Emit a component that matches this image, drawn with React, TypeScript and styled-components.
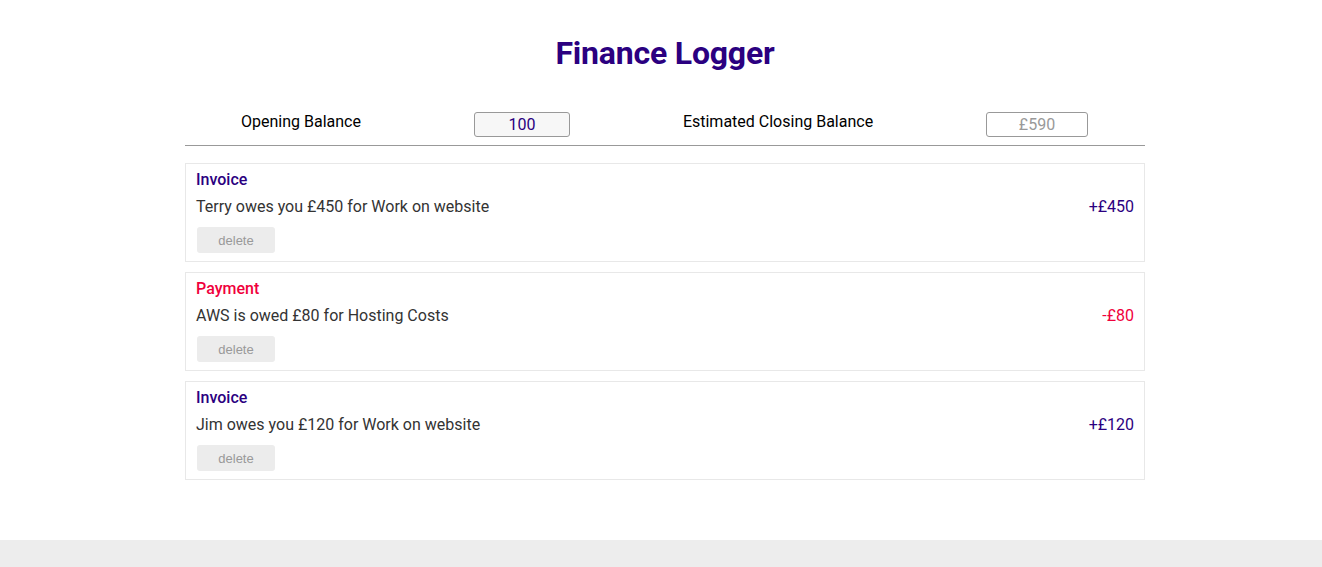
import React from "react";
import styled, { createGlobalStyle } from "styled-components";

const Global = createGlobalStyle`
  html, body { margin: 0; padding: 0; background: #fff; }
  body { font-family: Roboto, "Liberation Sans", sans-serif; }
  * { box-sizing: border-box; }
`;

const Page = styled.div`
  display: flex;
  flex-direction: column;
  min-height: 567px;
`;

const Content = styled.div`
  flex: 1;
  padding-left: 8px;
  padding-bottom: 60px;
`;

const Main = styled.main`
  width: 960px;
  margin: 0 auto;
`;

const Title = styled.h1`
  margin: 0;
  padding-top: 33px;
  height: 94px;
  text-align: center;
  font-size: 32px;
  font-weight: 700;
  letter-spacing: -0.2px;
  color: #2b0080;
  line-height: 40px;
`;

const Header = styled.div`
  display: grid;
  grid-template-columns: repeat(4, 1fr);
  align-items: center;
  height: 52px;
  padding-top: 10px;
  border-bottom: 1px solid #999;
  margin-bottom: 17px;
`;

const Label = styled.div<{ $shift: number }>`
  text-align: center;
  font-size: 16px;
  color: #000;
  padding-right: ${(p) => p.$shift}px;
  margin-top: -6px;
`;

const InputCell = styled.div<{ $offset: number }>`
  padding-left: ${(p) => p.$offset}px;
  display: flex;
`;

const BalanceInput = styled.input<{ $w: number; $muted?: boolean }>`
  width: ${(p) => p.$w}px;
  height: 25px;
  border: 1px solid #999;
  border-radius: 3px;
  background: ${(p) => (p.$muted ? "#fff" : "#f7f7f7")};
  color: ${(p) => (p.$muted ? "#999" : "#2b0080")};
  font-family: Roboto, "Liberation Sans", sans-serif;
  font-size: 16px;
  text-align: center;
  padding: 0;
`;

const List = styled.div`
  display: flex;
  flex-direction: column;
  gap: 10px;
`;

const Card = styled.div`
  border: 1px solid #e8e8e8;
  height: 99px;
  padding: 6px 10px 0 10px;
  display: grid;
  grid-template-columns: 1fr auto;
  grid-template-rows: 19px 34px auto;
`;

type Kind = "invoice" | "payment";

const KindLabel = styled.div<{ $type: Kind }>`
  grid-column: 1 / 3;
  font-size: 16px;
  font-weight: 500;
  color: ${(p) => (p.$type === "invoice" ? "#2b0080" : "#f0003c")};
  line-height: 19px;
`;

const Desc = styled.div`
  font-size: 16px;
  color: #333;
  align-self: center;
`;

const Amount = styled.div<{ $type: Kind }>`
  font-size: 16px;
  color: ${(p) => (p.$type === "invoice" ? "#2b0080" : "#f0003c")};
  align-self: center;
`;

const DeleteButton = styled.button`
  grid-column: 1 / 3;
  width: 78px;
  height: 26px;
  border: none;
  border-radius: 3px;
  background: #ececec;
  color: #999;
  font-family: "Liberation Sans", Arial, sans-serif;
  font-size: 13px;
  padding: 0;
  margin-left: 1px;
  margin-top: 4px;
`;

const Footer = styled.footer`
  height: 27px;
  background: #ededed;
`;

type Item = { type: Kind; text: string; amount: string };

const items: Item[] = [
  { type: "invoice", text: "Terry owes you £450 for Work on website", amount: "+£450" },
  { type: "payment", text: "AWS is owed £80 for Hosting Costs", amount: "-£80" },
  { type: "invoice", text: "Jim owes you £120 for Work on website", amount: "+£120" },
];

export default function App() {
  return (
    <Page>
      <Global />
      <Content>
        <Main>
          <Title>Finance Logger</Title>
          <Header>
            <Label $shift={8}>Opening Balance</Label>
            <InputCell $offset={49}>
              <BalanceInput $w={96} defaultValue="100" />
            </InputCell>
            <Label $shift={14}>Estimated Closing Balance</Label>
            <InputCell $offset={81}>
              <BalanceInput $w={102} $muted readOnly value="£590" />
            </InputCell>
          </Header>
          <List>
            {items.map((it, i) => (
              <Card key={i}>
                <KindLabel $type={it.type}>{it.type === "invoice" ? "Invoice" : "Payment"}</KindLabel>
                <Desc>{it.text}</Desc>
                <Amount $type={it.type}>{it.amount}</Amount>
                <DeleteButton>delete</DeleteButton>
              </Card>
            ))}
          </List>
        </Main>
      </Content>
      <Footer />
    </Page>
  );
}
